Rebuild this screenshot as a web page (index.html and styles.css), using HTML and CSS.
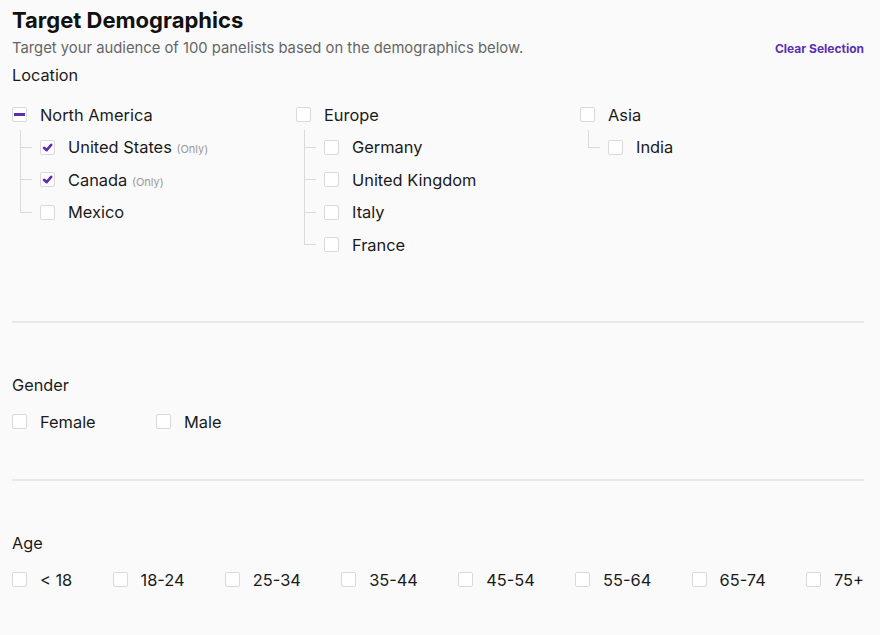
FILE: index.html
```html
<!DOCTYPE html>
<html>
<head>
<meta charset="utf-8">
<link rel="stylesheet" href="styles.css">
</head>
<body>
<div class="page">
  <h1 class="title">Target Demographics</h1>
  <div class="subrow">
    <span class="subtitle">Target your audience of 100 panelists based on the demographics below.</span>
    <a class="clear">Clear Selection</a>
  </div>

  <section class="section location">
    <div class="label">Location</div>
    <div class="regions">
      <div class="region">
        <div class="item"><span class="cb partial"></span><span class="txt">North America</span></div>
        <div class="children">
          <div class="item child"><span class="cb checked"><svg viewBox="0 0 13 13"><path d="M3 6.8 L5.6 9.2 L10.2 3.8" fill="none" stroke="#5b2fb3" stroke-width="2.6" stroke-linecap="round" stroke-linejoin="round"/></svg></span><span class="txt">United States <small>(Only)</small></span></div>
          <div class="item child"><span class="cb checked"><svg viewBox="0 0 13 13"><path d="M3 6.8 L5.6 9.2 L10.2 3.8" fill="none" stroke="#5b2fb3" stroke-width="2.6" stroke-linecap="round" stroke-linejoin="round"/></svg></span><span class="txt">Canada <small>(Only)</small></span></div>
          <div class="item child"><span class="cb"></span><span class="txt">Mexico</span></div>
        </div>
      </div>
      <div class="region">
        <div class="item"><span class="cb"></span><span class="txt">Europe</span></div>
        <div class="children">
          <div class="item child"><span class="cb"></span><span class="txt">Germany</span></div>
          <div class="item child"><span class="cb"></span><span class="txt">United Kingdom</span></div>
          <div class="item child"><span class="cb"></span><span class="txt">Italy</span></div>
          <div class="item child"><span class="cb"></span><span class="txt">France</span></div>
        </div>
      </div>
      <div class="region">
        <div class="item"><span class="cb"></span><span class="txt">Asia</span></div>
        <div class="children">
          <div class="item child"><span class="cb"></span><span class="txt">India</span></div>
        </div>
      </div>
    </div>
  </section>

  <hr class="divider">

  <section class="section gender">
    <div class="label">Gender</div>
    <div class="options gender-opts">
      <div class="item"><span class="cb"></span><span class="txt">Female</span></div>
      <div class="item"><span class="cb"></span><span class="txt">Male</span></div>
    </div>
  </section>

  <hr class="divider">

  <section class="section age">
    <div class="label">Age</div>
    <div class="options age-opts">
      <div class="item"><span class="cb"></span><span class="txt">&lt; 18</span></div>
      <div class="item"><span class="cb"></span><span class="txt">18-24</span></div>
      <div class="item"><span class="cb"></span><span class="txt">25-34</span></div>
      <div class="item"><span class="cb"></span><span class="txt">35-44</span></div>
      <div class="item"><span class="cb"></span><span class="txt">45-54</span></div>
      <div class="item"><span class="cb"></span><span class="txt">55-64</span></div>
      <div class="item"><span class="cb"></span><span class="txt">65-74</span></div>
      <div class="item"><span class="cb"></span><span class="txt">75+</span></div>
    </div>
  </section>
</div>
</body>
</html>
```

FILE: styles.css
```css
html, body {
  margin: 0;
  padding: 0;
  background: #fafafa;
}
body {
  font-family: "Inter", "Lato", sans-serif;
  color: #1a1a1a;
}
.page {
  width: 852px;
  padding: 6px 16px 0 12px;
}
.title {
  margin: 0;
  font-size: 22px;
  font-weight: 700;
  line-height: 28px;
  color: #111;
}
.subrow {
  display: flex;
  justify-content: space-between;
  align-items: center;
  margin-top: 4px;
  height: 20px;
}
.subtitle {
  font-size: 14.8px;
  color: #666;
}
.clear {
  font-size: 12px;
  font-weight: 700;
  color: #5b2fb3;
  cursor: pointer;
}
.label {
  font-size: 16.3px;
  line-height: 20px;
  color: #1a1a1a;
}
.location .label {
  margin-top: 7px;
}
.regions {
  display: flex;
  margin-top: 22px;
  height: 214px;
}
.region {
  width: 284px;
}
.item {
  display: flex;
  align-items: center;
  height: 15px;
  font-size: 16.4px;
}
.cb {
  box-sizing: border-box;
  width: 15px;
  height: 15px;
  border: 1px solid #d9d9d9;
  border-radius: 2px;
  background: #fff;
  position: relative;
  flex: none;
}
.cb svg {
  position: absolute;
  left: 0;
  top: 0;
  width: 13px;
  height: 13px;
}
.cb.partial::after {
  content: "";
  position: absolute;
  left: 1px;
  top: 5px;
  width: 11px;
  height: 3px;
  background: #5b2fb3;
}
.txt {
  margin-left: 13px;
  white-space: nowrap;
}
.txt small {
  font-size: 11px;
  color: #999;
}
.children {
  position: relative;
  display: flex;
  flex-direction: column;
  gap: 17.5px;
  margin-left: 8px;
  padding-left: 20px;
  padding-top: 17.5px;
}
.children::before {
  content: "";
  position: absolute;
  left: 0;
  top: 8px;
  bottom: 7px;
  border-left: 1px solid #dadada;
}
.child {
  position: relative;
}
.child::before {
  content: "";
  position: absolute;
  left: -20px;
  top: 7px;
  width: 12px;
  border-top: 1px solid #dadada;
}
.divider {
  border: none;
  height: 2px;
  background: #e8e8e8;
  margin: 0;
}
.gender .label {
  margin-top: 52px;
}
.options {
  display: flex;
  margin-top: 19px;
  margin-bottom: 50px;
}
.gender-opts .item {
  width: 144px;
}
.age .label {
  margin-top: 52px;
}
.age-opts {
  justify-content: space-between;
}
```
